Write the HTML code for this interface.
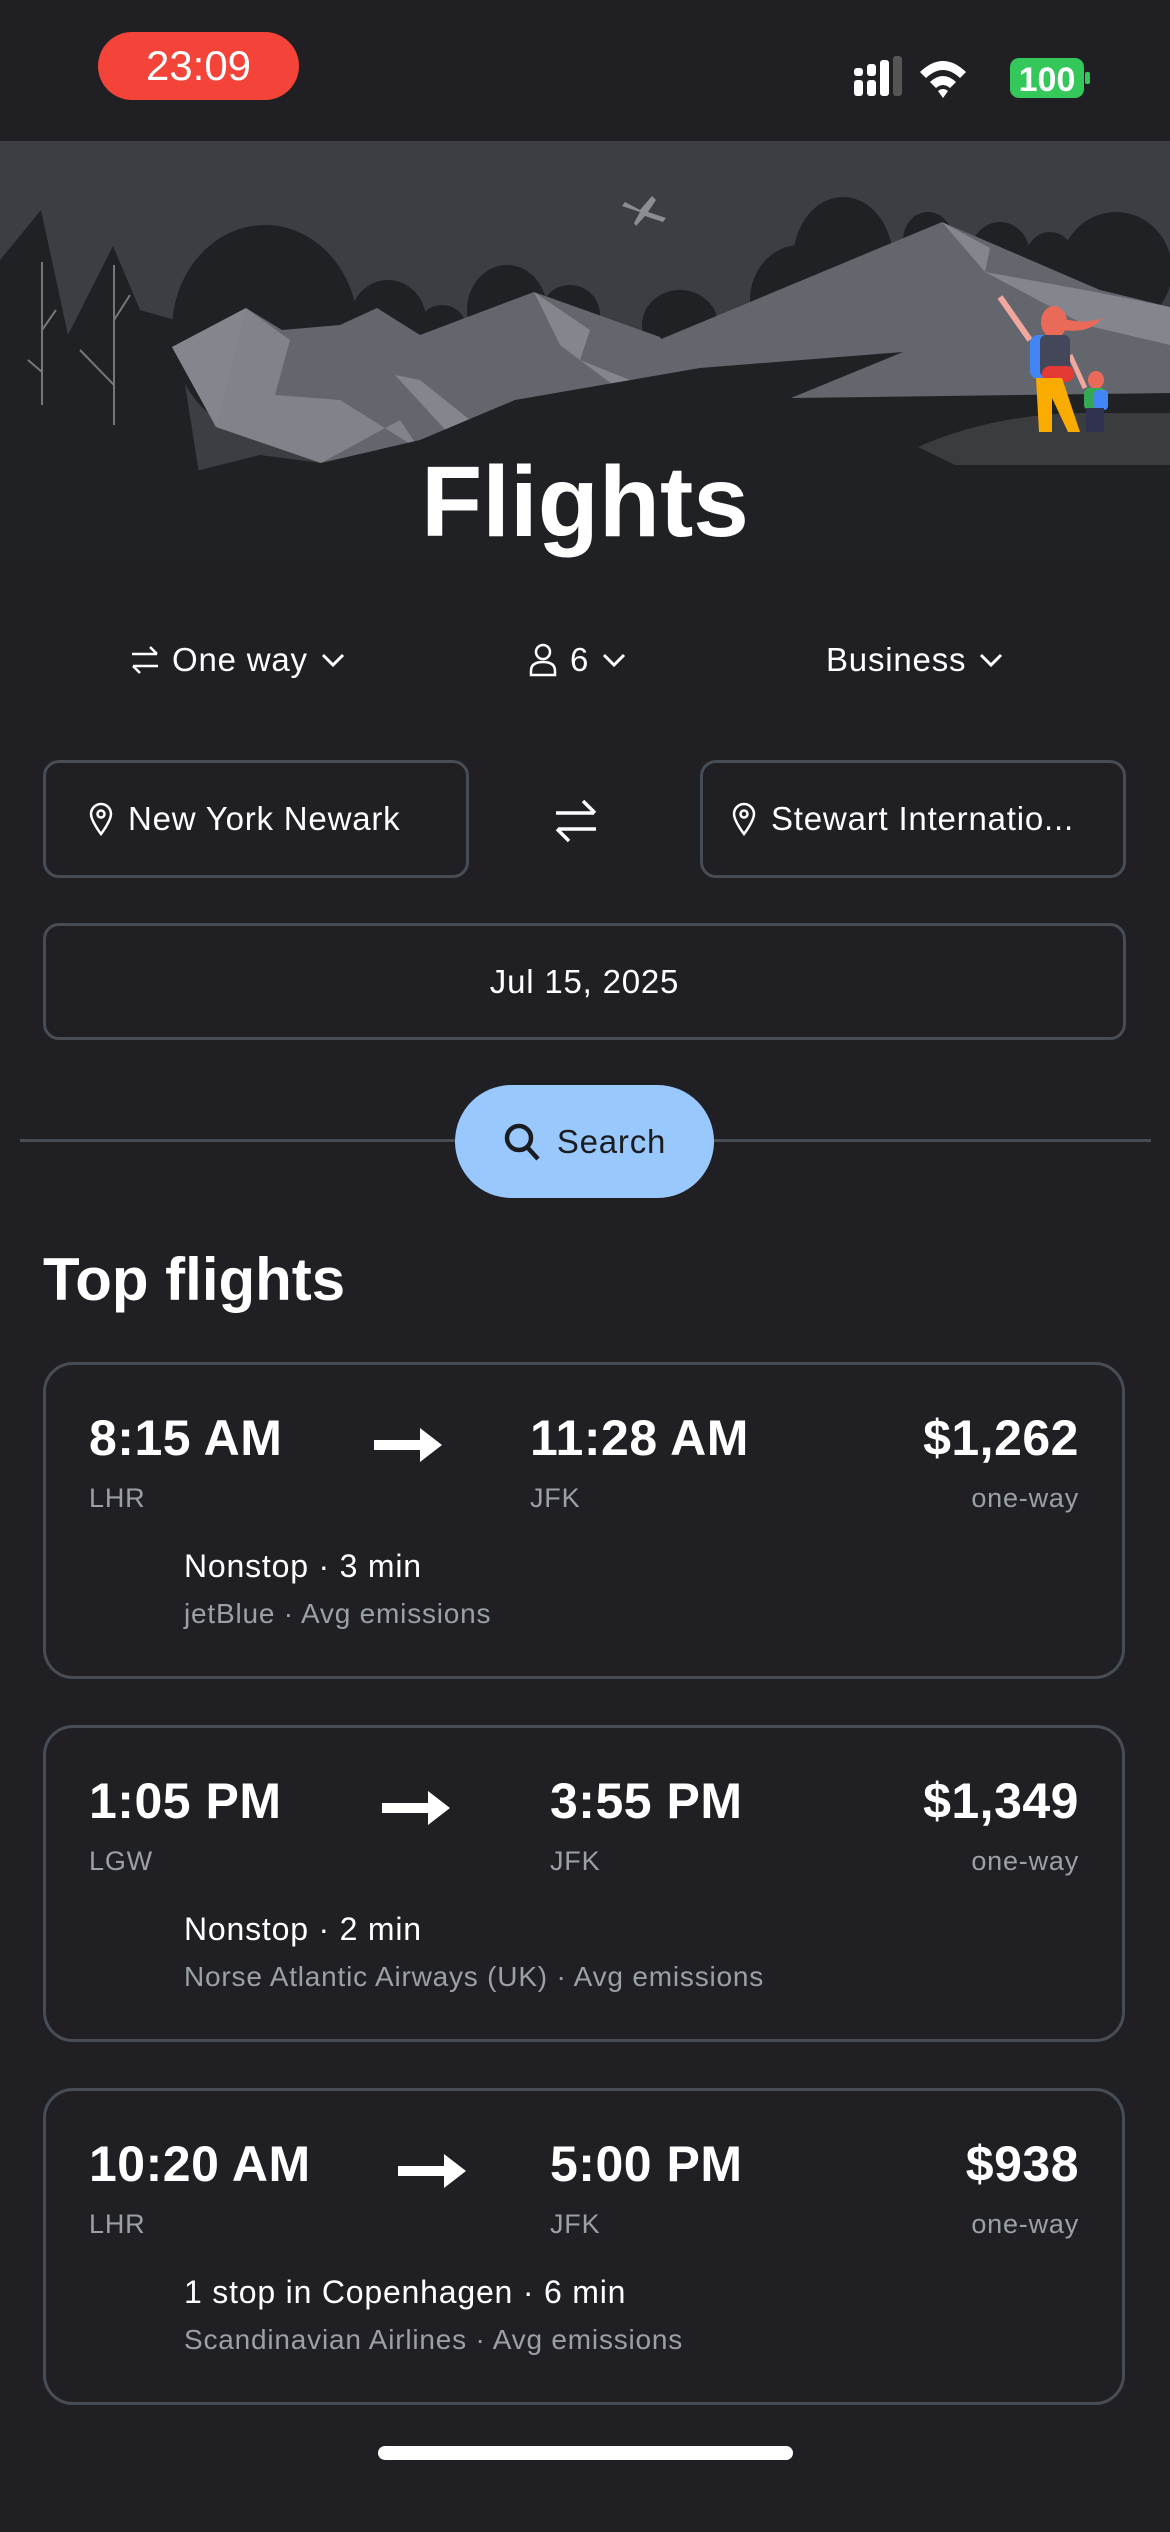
<!DOCTYPE html>
<html><head><meta charset="utf-8">
<style>
*{margin:0;padding:0;box-sizing:border-box}
body{width:1170px;height:2532px;background:#202024;font-family:"Liberation Sans",sans-serif;color:#fff;position:relative;overflow:hidden;letter-spacing:0.05em}
.abs{position:absolute}
.pill{left:98px;top:32px;width:201px;height:68px;border-radius:34px;background:#f4443a;font-size:42px;text-align:center;line-height:68px;color:#fff;letter-spacing:0}
.box{border:3px solid #474c55;border-radius:16px}
.opt{top:636px;font-size:33px;display:flex;align-items:center;gap:12px;height:48px}
.in{font-size:33px;display:flex;align-items:center;gap:14px}
.card{left:43px;width:1082px;height:317px;border:3px solid #474c55;border-radius:30px}
.t{font-size:50px;position:absolute;top:44px;font-weight:bold;letter-spacing:0.01em}
.c{font-size:27px;color:#9aa0a6;position:absolute;top:118px}
.n{font-size:32px;position:absolute;top:183px;left:138px}
.e{font-size:28px;color:#9aa0a6;position:absolute;top:233px;left:138px}
.p{right:43px;text-align:right}
</style></head><body>
<div class="abs pill">23:09</div>
<svg class="abs" style="left:852px;top:56px" width="240" height="46" viewBox="0 0 240 46">
<rect x="2" y="24" width="9" height="16" rx="3" fill="#fff"/><rect x="2" y="12" width="9" height="8" rx="3" fill="#fff"/>
<rect x="15" y="24" width="9" height="16" rx="3" fill="#fff"/><rect x="15" y="8" width="9" height="12" rx="3" fill="#fff"/>
<rect x="28" y="4" width="9" height="36" rx="3" fill="#fff"/>
<rect x="41" y="0" width="9" height="40" rx="3" fill="#555"/>
<path d="M68 16 Q91 -6 114 16 L108 22 Q91 6 74 22Z M78 26 Q91 14 104 26 L98 32 Q91 26 84 32Z M86 35 L91 42 L96 35 Q91 31 86 35Z" fill="#fff"/>
<rect x="158" y="2" width="74" height="40" rx="9" fill="#34c759"/><rect x="233" y="16" width="5" height="12" rx="2" fill="#34c759"/>
<text x="195" y="35" font-size="34" font-weight="bold" fill="#fff" text-anchor="middle" font-family="Liberation Sans" letter-spacing="0">100</text>
</svg>
<svg class="abs" style="left:0;top:0" width="1170" height="560" viewBox="0 0 1170 560">
<rect x="0" y="141" width="1170" height="340" fill="#3c3e43"/>
<g fill="#202124">
<ellipse cx="265" cy="330" rx="93" ry="105"/>
<ellipse cx="388" cy="320" rx="38" ry="40"/><ellipse cx="442" cy="330" rx="25" ry="25"/><ellipse cx="507" cy="310" rx="40" ry="45"/><ellipse cx="570" cy="315" rx="30" ry="30"/><ellipse cx="680" cy="325" rx="38" ry="35"/>
<ellipse cx="843" cy="260" rx="50" ry="63"/><ellipse cx="800" cy="300" rx="50" ry="55"/><ellipse cx="928" cy="240" rx="25" ry="28"/><ellipse cx="1000" cy="255" rx="30" ry="33"/><ellipse cx="1050" cy="260" rx="25" ry="28"/><ellipse cx="1116" cy="270" rx="56" ry="58"/>
<polygon points="0,260 41,210 68,335 113,246 140,310 175,320 200,480 0,480"/>
</g>
<g stroke="#777" stroke-width="2" fill="none"><line x1="42" y1="262" x2="42" y2="405"/><line x1="114" y1="265" x2="114" y2="425"/><line x1="42" y1="330" x2="56" y2="310"/><line x1="28" y1="360" x2="42" y2="372"/><line x1="114" y1="320" x2="130" y2="295"/><line x1="80" y1="350" x2="114" y2="385"/></g>
<path d="M640 210 L652 196 L656 200 L648 212 L666 218 L663 222 L645 216 L636 226 L634 223 L640 212 L622 206 L625 202Z" fill="#8a8d92"/>
<!-- big right mountain -->
<polygon points="642,347 942,222 1100,290 1170,307 1170,420 642,420" fill="#63666c"/>
<polygon points="942,222 990,248 985,272 1085,290 1170,307 1170,345 1085,325 985,272" fill="#83868c"/>
<!-- left mountains -->
<polygon points="172,347 246,308 282,330 340,325 377,308 420,335 534,292 660,337 690,400 541,413 321,463 216,427" fill="#63666c"/>
<polygon points="172,347 246,308 270,330 250,390 216,427" fill="#83868c"/>
<polygon points="246,308 290,340 275,395 340,400 420,450 400,420 321,463 216,427" fill="#80838a"/>
<polygon points="534,292 590,330 580,360 680,400 541,413 620,390 560,345" fill="#83868c"/>
<polygon points="395,375 420,380 470,420 541,413 450,435" fill="#83868c"/>
<!-- ground -->
<path d="M0 480 L200 470 L260 455 L321 463 L420 440 L515 400 L700 368 L903 352 L791 398 L1170 393 L1170 560 L0 560Z" fill="#202124"/>
<path d="M918 447 Q990 415 1080 413 L1170 413 L1170 465 L955 465Z" fill="#3a3c40"/>
<!-- people -->
<path d="M1000 297 L1030 340" stroke="#f0a79e" stroke-width="6"/>
<path d="M1070 355 L1085 388" stroke="#f0a79e" stroke-width="5"/>
<ellipse cx="1054" cy="322" rx="13" ry="16" fill="#ea6a5a"/><path d="M1060 318 Q1085 325 1102 318 Q1090 334 1062 330Z" fill="#ea6a5a"/>
<rect x="1030" y="335" width="40" height="44" rx="8" fill="#4285f4"/>
<rect x="1040" y="335" width="30" height="42" rx="6" fill="#44475a"/>
<rect x="1042" y="366" width="32" height="16" rx="8" fill="#e53935"/>
<path d="M1036 378 L1062 378 L1080 432 L1068 432 L1052 398 L1052 432 L1039 432Z" fill="#f9ab00"/>
<ellipse cx="1096" cy="380" rx="8" ry="9" fill="#ea6a5a"/>
<rect x="1084" y="388" width="22" height="22" rx="5" fill="#34a853"/><rect x="1094" y="390" width="14" height="20" rx="4" fill="#4285f4"/>
<rect x="1086" y="408" width="18" height="24" fill="#2f3350"/>
</svg>
<div class="abs" style="left:0;width:1170px;top:445px;text-align:center;font-size:100px;line-height:115px;font-weight:bold;letter-spacing:0">Flights</div>
<div class="abs opt" style="left:130px"><svg width="30" height="34" viewBox="0 0 30 34" fill="none" stroke="#fff" stroke-width="2.5"><path d="M2 11H27M20 4l7 7M28 23H3M10 30l-7-7"/></svg><span>One way</span><svg width="26" height="20" viewBox="0 0 26 20"><path d="M3 5l10 10 10-10" stroke="#fff" stroke-width="3" fill="none"/></svg></div>
<div class="abs opt" style="left:528px"><svg width="30" height="36" viewBox="0 0 30 36" fill="none" stroke="#fff" stroke-width="2.5"><circle cx="15" cy="10" r="7"/><path d="M3 33v-4q0-9 12-9t12 9v4Z"/></svg><span>6</span><svg width="26" height="20" viewBox="0 0 26 20"><path d="M3 5l10 10 10-10" stroke="#fff" stroke-width="3" fill="none"/></svg></div>
<div class="abs opt" style="left:826px"><span>Business</span><svg width="26" height="20" viewBox="0 0 26 20"><path d="M3 5l10 10 10-10" stroke="#fff" stroke-width="3" fill="none"/></svg></div>
<div class="abs box in" style="left:43px;top:760px;width:426px;height:118px;padding-left:42px"><svg width="26" height="34" viewBox="0 0 26 34" fill="none" stroke="#fff" stroke-width="2.5"><path d="M13 32S3 19 3 12a10 10 0 0120 0c0 7-10 20-10 20Z"/><circle cx="13" cy="12" r="3.5"/></svg><span>New York Newark</span></div>
<svg class="abs" style="left:553px;top:795px" width="46" height="52" viewBox="0 0 46 52" fill="none" stroke="#fff" stroke-width="3.5"><path d="M3 18H41M30 6l12 12M43 34H5M16 46L4 34"/></svg>
<div class="abs box in" style="left:700px;top:760px;width:426px;height:118px;padding-left:28px;white-space:nowrap;overflow:hidden"><svg width="26" height="34" viewBox="0 0 26 34" fill="none" stroke="#fff" stroke-width="2.5"><path d="M13 32S3 19 3 12a10 10 0 0120 0c0 7-10 20-10 20Z"/><circle cx="13" cy="12" r="3.5"/></svg><span>Stewart Internatio...</span></div>
<div class="abs box" style="left:43px;top:923px;width:1083px;height:117px;font-size:33px;text-align:center;line-height:111px">Jul 15, 2025</div>
<div class="abs" style="left:20px;top:1139px;width:1131px;height:3px;background:#474c55"></div>
<div class="abs" style="left:455px;top:1085px;width:259px;height:113px;border-radius:57px;background:#99c8ff;color:#1b1c20;font-size:33px;display:flex;align-items:center;justify-content:center;gap:16px"><svg width="38" height="40" viewBox="0 0 38 40" fill="none" stroke="#1b1c20" stroke-width="4.5"><circle cx="16" cy="16" r="12"/><path d="M25 26l10 11"/></svg>Search</div>
<div class="abs" style="left:43px;top:1245px;font-size:60px;font-weight:bold;letter-spacing:0">Top flights</div>
<div class="abs card" style="top:1362px">
<div class="t" style="left:43px">8:15 AM</div>
<svg class="abs" style="left:326px;top:60px" width="72" height="40" viewBox="0 0 72 40"><path d="M2 15H48V3L70 20 48 37V25H2Z" fill="#fff"/></svg>
<div class="t" style="left:484px">11:28 AM</div>
<div class="t p">$1,262</div>
<div class="c" style="left:43px">LHR</div><div class="c" style="left:484px">JFK</div><div class="c p">one-way</div>
<div class="n">Nonstop · 3 min</div><div class="e">jetBlue · Avg emissions</div>
</div>
<div class="abs card" style="top:1725px">
<div class="t" style="left:43px">1:05 PM</div>
<svg class="abs" style="left:334px;top:60px" width="72" height="40" viewBox="0 0 72 40"><path d="M2 15H48V3L70 20 48 37V25H2Z" fill="#fff"/></svg>
<div class="t" style="left:504px">3:55 PM</div>
<div class="t p">$1,349</div>
<div class="c" style="left:43px">LGW</div><div class="c" style="left:504px">JFK</div><div class="c p">one-way</div>
<div class="n">Nonstop · 2 min</div><div class="e">Norse Atlantic Airways (UK) · Avg emissions</div>
</div>
<div class="abs card" style="top:2088px">
<div class="t" style="left:43px">10:20 AM</div>
<svg class="abs" style="left:350px;top:60px" width="72" height="40" viewBox="0 0 72 40"><path d="M2 15H48V3L70 20 48 37V25H2Z" fill="#fff"/></svg>
<div class="t" style="left:504px">5:00 PM</div>
<div class="t p">$938</div>
<div class="c" style="left:43px">LHR</div><div class="c" style="left:504px">JFK</div><div class="c p">one-way</div>
<div class="n">1 stop in Copenhagen · 6 min</div><div class="e">Scandinavian Airlines · Avg emissions</div>
</div>
<div class="abs" style="left:378px;top:2446px;width:415px;height:14px;border-radius:7px;background:#fff"></div>
</body></html>
